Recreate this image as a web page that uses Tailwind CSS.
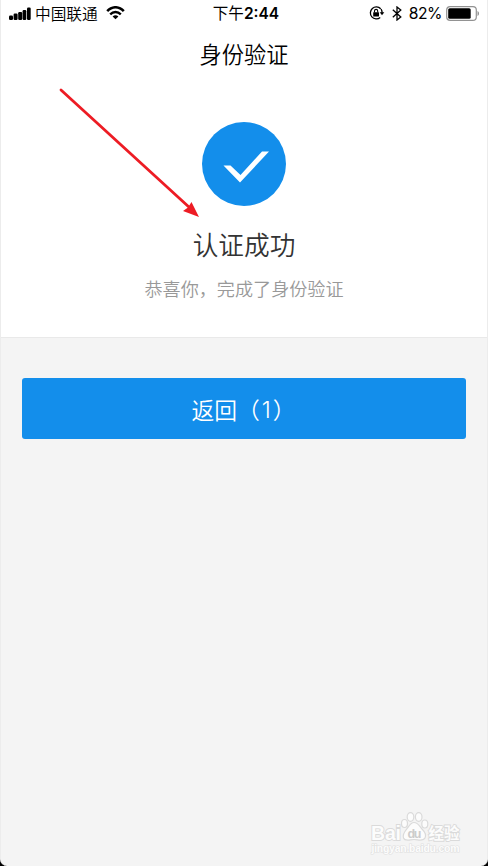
<!DOCTYPE html>
<html lang="zh-CN">
<head>
    <meta charset="UTF-8">
    <meta name="viewport" content="width=device-width, initial-scale=1.0">
    <title>身份验证</title>
    <script src="https://cdn.jsdelivr.net/npm/@tailwindcss/browser@4"></script>
</head>
<body class="bg-black overflow-hidden">
    <div class="relative flex flex-col w-[488px] h-[866px] overflow-hidden bg-[#f4f4f4] rounded-b-[7px] border-x border-[#ececec] font-['Inter','Noto_Sans_CJK_SC',sans-serif]">
        <div class="h-[338px] bg-white border-b border-[#e9e9e9] flex flex-col items-center">
            <!-- Status bar -->
            <div class="w-full h-[27px] pl-[8px] pr-[7px] grid grid-cols-3 items-center text-black text-[16px] leading-none">
                <div class="flex items-center whitespace-nowrap">
                    <svg class="w-[22px] h-[13px] mr-[4px]" viewBox="0 0 22 13">
                        <rect x="0" y="8.5" width="4" height="4.5" rx="1.2"/>
                        <rect x="4.6" y="6.5" width="4" height="6.5" rx="1.2"/>
                        <rect x="9.2" y="5" width="4" height="8" rx="1.2"/>
                        <rect x="13.6" y="3" width="3.7" height="10" rx="1.2"/>
                        <rect x="18" y="0.5" width="3.7" height="12.5" rx="1.2"/>
                    </svg>
                    <span class="text-[15.7px] pt-[2px] font-[350]">中国联通</span>
                    <svg class="w-[19px] h-[14px] ml-[8px]" viewBox="0 0 19 14" fill="none" stroke="#000">
                        <path d="M1.2 5.2C6-.1 13-.1 17.8 5.2" stroke-width="2.5"/>
                        <path d="M4.2 8.4C7.3 5.2 11.7 5.2 14.8 8.4" stroke-width="2.3"/>
                        <path d="M9.5 13.3L6.6 10.4C8.3 8.9 10.7 8.9 12.4 10.4Z" fill="#000" stroke="none"/>
                    </svg>
                </div>
                <div class="text-center font-semibold text-[15.5px] whitespace-nowrap pl-[3px] pt-[1px]"><span class="font-normal">下午</span>2:44</div>
                <div class="flex items-center justify-end whitespace-nowrap">
                    <svg class="w-[16px] h-[14px] mr-[7px]" viewBox="0 0 16 14" fill="none" stroke="#000">
                        <path d="M11.7 2.8A6 6 0 1 0 11.2 11.6M12.1 3.2A6 6 0 0 1 13 7" stroke-width="1.3"/>
                        <path d="M10.7 6.2H15.3L13 9.2Z" fill="#000" stroke="none"/>
                        <rect x="4.2" y="6.2" width="5.8" height="4.2" rx=".5" fill="#000" stroke="none"/>
                        <path d="M5.5 6.5V5a1.6 1.6 0 0 1 3.2 0v1.5" stroke-width="1.1"/>
                    </svg>
                    <svg class="w-[10px] h-[15px] mr-[7px]" viewBox="0 0 10 15" fill="none" stroke="#000" stroke-width="1.3">
                        <path d="M.8 3.8L8.8 11 5 14V1L8.8 4 .8 11.2"/>
                    </svg>
                    <span class="text-[15.7px] tracking-[-0.5px] pt-[1px]">82%</span>
                    <svg class="w-[34px] h-[15px] ml-[4px]" viewBox="0 0 34 15">
                        <rect x=".7" y=".7" width="29.6" height="13.6" rx="3.4" fill="#fff" stroke="#929292" stroke-width="1.2"/>
                        <rect x="2.2" y="2.2" width="22.5" height="10.6" rx="1.6"/>
                        <path d="M31.5 5c2 .7 2 4.3 0 5z" fill="#929292"/>
                    </svg>
                </div>
            </div>

            <!-- Title -->
            <h1 class="h-[56px] flex items-center text-[22.3px] font-[350] text-black">身份验证</h1>

            <!-- Result -->
            <svg class="w-[84px] h-[84px] mt-[39px]" viewBox="0 0 84 84">
                <circle cx="42" cy="42" r="42" fill="#138eeb"/>
                <path d="M21.5 43.5H28.5L38.5 53 60 29.5H67L38 60.5Z" fill="#fff"/>
            </svg>
            <p class="mt-[21px] h-[38px] flex items-center text-[25.7px] font-[350] text-[#333]">认证成功</p>
            <p class="mt-[10px] h-[30px] flex items-center text-[18.1px] font-[350] text-[#999]">恭喜你，完成了身份验证</p>
        </div>

        <!-- Back button -->
        <button class="mt-[40px] mx-[21px] h-[61px] pt-[3px] pr-[1px] shrink-0 rounded-[3px] bg-[#138eeb] text-white text-[22.8px] font-[350] flex items-center justify-center font-['Noto_Sans_CJK_SC',sans-serif]">返回（<span class="font-['Inter',sans-serif] w-[13px] text-center">1</span>）</button>

        <!-- Pointer arrow -->
        <svg class="absolute left-[-1px] top-0 w-[220px] h-[230px]" viewBox="0 0 220 230">
            <path d="M61 90L190 208" stroke="#ed1c24" stroke-width="2.8" stroke-linecap="round"/>
            <path d="M199 217L183 211 188 207.5 191.5 202Z" fill="#ed1c24"/>
        </svg>

        <!-- Watermark -->
        <svg class="absolute left-[369px] top-[808px] w-[96px] h-[52px]" viewBox="370 808 96 52" fill="#fcfcfc" stroke="#dadada" stroke-width="1.2">
            <ellipse cx="404.5" cy="823.5" rx="3" ry="4"/>
            <ellipse cx="410.5" cy="817" rx="3.3" ry="4.3"/>
            <ellipse cx="418.7" cy="817" rx="3.3" ry="4.3"/>
            <ellipse cx="424.8" cy="824" rx="3" ry="4"/>
            <path d="M414 822.5C418 822.5 419.5 826 422 829 425 832 426.5 835 425 838 423 842 418 839.5 414 839.5S405 842 403.5 838C402 834 405 831 407.5 828 409.5 825 411 822.5 414 822.5Z"/>
            <g class="font-['Liberation_Sans','Noto_Sans_CJK_SC',sans-serif] font-bold [paint-order:stroke]">
                <text x="371" y="840" font-size="19.5" textLength="30" stroke-width="1.8">Bai</text>
                <text x="407.5" y="838" font-size="12.5" fill="#cccccc" stroke="none" textLength="14">du</text>
                <text x="428.5" y="839" font-size="15.5" stroke-width="1.8">经验</text>
                <text x="371.5" y="852" font-size="10.5" stroke="#e0e0e0" stroke-width="1.2" textLength="88">jingyan.baidu.com</text>
            </g>
        </svg>
    </div>
</body>
</html>
